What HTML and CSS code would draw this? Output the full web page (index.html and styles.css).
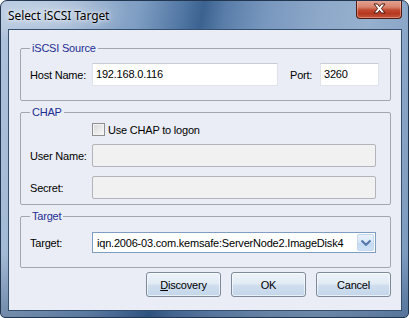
FILE: index.html
```html
<!DOCTYPE html>
<html>
<head>
<meta charset="utf-8">
<link rel="stylesheet" href="styles.css">
</head>
<body>
<div class="window">
  <div class="titlebar">
    <span class="title">Select iSCSI Target</span>
    <div class="close">
      <svg width="13" height="11" viewBox="0 0 13 11">
        <path d="M1 1 H4.5 L6.5 3.6 L8.5 1 H12 L8.4 5.5 L12 10 H8.5 L6.5 7.4 L4.5 10 H1 L4.6 5.5 Z" fill="#fff" stroke="#4a1a12" stroke-width="1" stroke-linejoin="round"/>
      </svg>
    </div>
  </div>
  <div class="client">
    <fieldset class="group g1">
      <legend>iSCSI Source</legend>
      <div class="row">
        <span class="lbl">Host Name:</span>
        <div class="input host">192.168.0.116</div>
        <span class="lbl port-lbl">Port:</span>
        <div class="input port">3260</div>
      </div>
    </fieldset>
    <fieldset class="group g2">
      <legend>CHAP</legend>
      <div class="row check-row">
        <span class="lbl"></span>
        <span class="checkbox"></span>
        <span class="check-text">Use CHAP to logon</span>
      </div>
      <div class="row gap-row">
        <span class="lbl">User Name:</span>
        <div class="input disabled wide"></div>
      </div>
      <div class="row gap-row2">
        <span class="lbl">Secret:</span>
        <div class="input disabled wide"></div>
      </div>
    </fieldset>
    <fieldset class="group g3">
      <legend>Target</legend>
      <div class="row">
        <span class="lbl">Target:</span>
        <div class="combo wide">
          <span class="combo-text">iqn.2006-03.com.kemsafe:ServerNode2.ImageDisk4</span>
          <span class="combo-btn">
            <svg width="12" height="8" viewBox="0 0 12 8">
              <path d="M1.5 1.5 L6 5.8 L10.5 1.5" fill="none" stroke="#5579ab" stroke-width="2.2" stroke-linejoin="miter"/>
            </svg>
          </span>
        </div>
      </div>
    </fieldset>
    <div class="buttons">
      <button class="btn"><u>D</u>iscovery</button>
      <button class="btn">OK</button>
      <button class="btn">Cancel</button>
    </div>
  </div>
</div>
</body>
</html>
```
FILE: styles.css
```css
html, body {
  margin: 0;
  padding: 0;
  background: #ffffff;
}

.window {
  width: 409px;
  height: 318px;
  box-sizing: border-box;
  border: 1px solid #22364f;
  border-radius: 7px 7px 5px 5px;
  background:
    radial-gradient(ellipse 90px 30px at 40px 12px, rgba(255,255,255,0.35), rgba(255,255,255,0) 100%),
    linear-gradient(180deg, rgba(255,255,255,0) 0%, rgba(255,255,255,0) 80%, rgba(20,50,90,0.35) 100%),
    linear-gradient(100deg, #aec3dc 0%, #9db5d2 16%, #7f9ec3 30%, #4f75a2 40%, #3b6290 44%, #5a7ea9 49%, #7998bf 58%, #8ea9c9 70%, #96b0ce 80%, #86a2c4 92%, #7897bb 100%);
  display: flex;
  flex-direction: column;
  overflow: hidden;
  font-family: "Liberation Sans", Arial, sans-serif;
  font-size: 11px;
  letter-spacing: -0.2px;
  color: #000;
}

.titlebar {
  height: 28px;
  display: flex;
  align-items: flex-start;
  padding-left: 7px;
  padding-right: 6px;
}

.title {
  flex: 1;
  font-family: "Noto Sans", "Open Sans", sans-serif;
  font-size: 12px;
  letter-spacing: -0.1px;
  line-height: 14px;
  margin-top: 8px;
  color: #000;
  text-shadow: 0 0 6px rgba(255,255,255,0.9), 0 0 3px rgba(255,255,255,0.9);
}

.close {
  width: 46px;
  height: 19px;
  margin-top: -1px;
  box-sizing: border-box;
  border: 1px solid #4e1d16;
  border-top: none;
  border-radius: 0 0 4px 4px;
  background: linear-gradient(180deg, #e4a897 0%, #d8826c 40%, #c24a32 55%, #b6391f 75%, #c4563c 100%);
  box-shadow: inset 0 0 0 1px rgba(255,200,180,0.45);
  display: flex;
  align-items: center;
  justify-content: center;
}

.close svg {
  display: block;
  margin-top: -1px;
}

.client {
  flex: 1;
  margin: 0 6px 6px 7px;
  border: 1px solid #34506f;
  background: #eaedf6;
  display: flex;
  flex-direction: column;
  padding: 0 10px 0 11px;
}

.group {
  margin: 0;
  border: 1px solid #a3a6ad;
  border-radius: 2px;
  padding: 0 13px 0 9px;
  min-width: 0;
}

.group legend {
  color: #1e2d92;
  line-height: 13px;
  padding: 0 2px;
  margin-left: 0;
}

.g1 {
  margin-top: 12px;
  padding-top: 8px;
  padding-bottom: 14px;
}

.g2 {
  margin-top: 5px;
  padding-top: 3px;
  padding-bottom: 5px;
}

.g3 {
  margin-top: 5px;
  padding-top: 9px;
  padding-bottom: 14px;
}

.row {
  display: flex;
  align-items: center;
}

.lbl {
  width: 62px;
  flex: none;
}

.input {
  height: 23px;
  box-sizing: border-box;
  border: 1px solid #dfe3ea;
  border-top-color: #c8ccd3;
  background: #fff;
  padding: 0 0 0 3px;
  line-height: 20px;
  font-size: 11px;
}

.host {
  width: 186px;
}

.port-lbl {
  width: auto;
  margin-left: 12px;
  margin-right: 0;
  flex: 1;
}

.port {
  width: 59px;
  flex: none;
  margin-right: -2px;
}

.wide {
  width: 284px;
}

.disabled {
  background: #f1f1f1;
  border: 1px solid #b1b4b9;
  border-radius: 2px;
}

.check-row {
  height: 15px;
}

.checkbox {
  width: 13px;
  height: 13px;
  box-sizing: border-box;
  border: 1px solid #8e8f8f;
  background: linear-gradient(135deg, #d6d6d6 0%, #ececec 60%, #f7f7f7 100%);
  box-shadow: inset 0 0 0 1px #f4f4f4;
  flex: none;
}

.check-text {
  margin-left: 3px;
}

.gap-row {
  margin-top: 7px;
}

.gap-row2 {
  margin-top: 9px;
}

.combo {
  height: 21px;
  box-sizing: border-box;
  border: 1px solid #7f9dbf;
  background: #fff;
  display: flex;
  align-items: center;
  padding-left: 4px;
  padding-right: 1px;
}

.combo-text {
  flex: 1;
  white-space: nowrap;
  overflow: hidden;
}

.combo-btn {
  width: 17px;
  height: 17px;
  box-sizing: border-box;
  border: 1px solid #c3d7ee;
  border-radius: 2px;
  background: linear-gradient(180deg, #e9f2fc 0%, #d8e7f8 50%, #c4daf2 51%, #cfe1f5 100%);
  display: flex;
  align-items: center;
  justify-content: center;
}

.combo-btn svg {
  display: block;
}

.buttons {
  display: flex;
  justify-content: flex-end;
  gap: 10px;
  margin-top: 4px;
}

.btn {
  width: 75px;
  height: 25px;
  box-sizing: border-box;
  border: 1px solid #7d8a99;
  border-radius: 3px;
  background: linear-gradient(180deg, #eef3f9 0%, #e2ebf5 45%, #cfdeee 55%, #c3d6ea 100%);
  box-shadow: inset 0 0 0 1px rgba(255,255,255,0.6);
  font-family: "Liberation Sans", Arial, sans-serif;
  font-size: 11px;
  letter-spacing: -0.2px;
  color: #000;
  padding: 0;
}

.btn u {
  text-decoration: underline;
}
```
